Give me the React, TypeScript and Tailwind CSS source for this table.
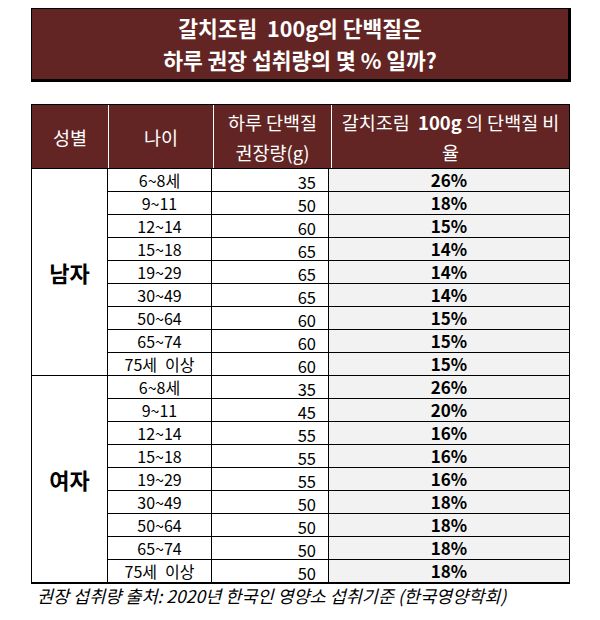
import React from "react";

const male = [
  ["6~8세", "35", "26%"],
  ["9~11", "50", "18%"],
  ["12~14", "60", "15%"],
  ["15~18", "65", "14%"],
  ["19~29", "65", "14%"],
  ["30~49", "65", "14%"],
  ["50~64", "60", "15%"],
  ["65~74", "60", "15%"],
  ["75세\u2002이상", "60", "15%"],
];
const female = [
  ["6~8세", "35", "26%"],
  ["9~11", "45", "20%"],
  ["12~14", "55", "16%"],
  ["15~18", "55", "16%"],
  ["19~29", "55", "16%"],
  ["30~49", "50", "18%"],
  ["50~64", "50", "18%"],
  ["65~74", "50", "18%"],
  ["75세\u2002이상", "50", "18%"],
];

function Group({ label, rows }: { label: string; rows: string[][] }) {
  return (
    <div className="flex">
      <div className="w-[76px] shrink-0 flex items-center justify-center text-[22px] font-bold text-black border-t border-r border-black">
        {label}
      </div>
      <div className="flex-1 flex flex-col">
        {rows.map((r, i) => (
          <div key={i} className="flex h-[23px] border-t border-black">
            <div className="w-[104px] shrink-0 flex items-center justify-center text-[16px] leading-[22px] text-black border-r border-black">
              {r[0]}
            </div>
            <div className="w-[117px] shrink-0 flex items-center justify-end pr-[12px] pt-[3px] text-[16.5px] leading-[22px] text-black border-r border-black">
              {r[1]}
            </div>
            <div className="flex-1 flex items-center justify-center bg-[#f2f2f2] text-[17px] leading-[22px] font-bold text-black">
              {r[2]}
            </div>
          </div>
        ))}
      </div>
    </div>
  );
}

export default function App() {
  return (
    <div
      className="w-[600px] h-[620px] bg-white overflow-hidden"
      style={{ fontFamily: '"Noto Sans CJK KR", "Noto Sans", sans-serif' }}
    >
      <div className="ml-[31px] mt-[8px] w-[540px] h-[74px] bg-[#632523] border-t border-l border-black border-r-[3px] border-b-[3px] flex flex-col items-center justify-center text-white font-bold text-[21.5px] leading-[32px]">
        <div>갈치조림&nbsp;&nbsp;100g의 단백질은</div>
        <div>하루 권장 섭취량의 몇 % 일까?</div>
      </div>

      <div className="ml-[31px] mt-[22px] w-[539px] border-l border-t border-r border-black border-b-2">
        <div className="flex h-[63px] bg-[#632523] text-white text-[18.5px] leading-[30px]">
          <div className="w-[76px] shrink-0 flex items-center justify-center">성별</div>
          <div className="w-[105px] shrink-0 flex items-center justify-center border-l border-white">나이</div>
          <div className="w-[118px] shrink-0 flex flex-col items-center justify-center border-l border-white">
            <div>하루 단백질</div>
            <div>권장량(g)</div>
          </div>
          <div className="flex-1 flex flex-col items-center justify-center border-l border-white">
            <div className="whitespace-nowrap">
              갈치조림&nbsp;&nbsp;<span className="font-bold">100g</span> 의 단백질 비
            </div>
            <div>율</div>
          </div>
        </div>
        <Group label="남자" rows={male} />
        <Group label="여자" rows={female} />
      </div>

      <div className="ml-[37px] mt-[1px] text-[17.5px] leading-[22px] italic text-black whitespace-nowrap">
        권장 섭취량 출처: 2020년 한국인 영양소 섭취기준 (한국영양학회)
      </div>
    </div>
  );
}
